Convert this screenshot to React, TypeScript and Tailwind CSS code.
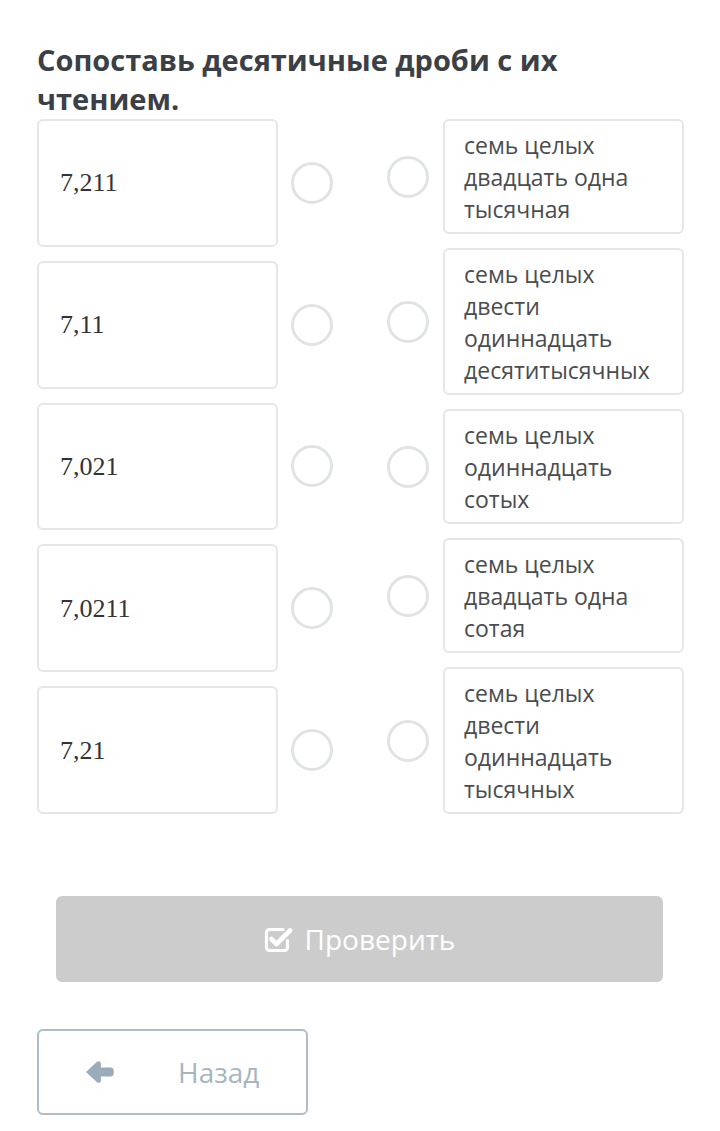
const left = ["7,211", "7,11", "7,021", "7,0211", "7,21"];

const right = [
  ["семь целых", "двадцать одна", "тысячная"],
  ["семь целых", "двести", "одиннадцать", "десятитысячных"],
  ["семь целых", "одиннадцать", "сотых"],
  ["семь целых", "двадцать одна", "сотая"],
  ["семь целых", "двести", "одиннадцать", "тысячных"],
];

const Radio = () => (
  <div className="w-[42px] h-[42px] shrink-0 rounded-full border-[3px] border-[#e0e3e5] bg-white" />
);

const CheckIcon = () => (
  <svg width="29" height="27" viewBox="0 0 29 27" fill="none">
    <path
      d="M19 3.5H5.5a3 3 0 0 0-3 3v15a3 3 0 0 0 3 3h15a3 3 0 0 0 3-3v-7"
      stroke="white"
      strokeWidth="3.2"
      strokeLinecap="round"
    />
    <path
      d="M7.5 13l5 5L26 4.5"
      stroke="white"
      strokeWidth="4.6"
      strokeLinecap="round"
      strokeLinejoin="round"
    />
  </svg>
);

const ArrowIcon = () => (
  <svg width="29" height="24" viewBox="0 0 29 24" fill="#9aacba">
    <path d="M1 12 12 1.8c1.6-1.4 3.9-.3 3.9 1.8V7.5h9.8c1.8 0 3 1.2 3 3v3c0 1.8-1.2 3-3 3h-9.8v3.9c0 2.1-2.3 3.2-3.9 1.8L1 12z" />
  </svg>
);

export default function App() {
  return (
    <div className="w-[720px] min-h-[1131px] bg-white px-[37px] pt-[40px] font-['Open_Sans',sans-serif]">
      <h1 className="text-[29px] leading-[39px] font-bold text-[#3b4047] pr-[100px]">
        Сопоставь десятичные дроби с их чтением.
      </h1>

      <div className="mt-px flex">
        <div className="flex flex-col gap-[14px] w-[297px] shrink-0">
          {left.map((v) => (
            <div key={v} className="flex-1 flex items-center gap-[13px]">
              <div className="w-[241px] shrink-0 h-full flex items-center rounded-[6px] border-2 border-[#e4e6e8] pl-[21px] font-['Liberation_Serif',serif] text-[26px] text-[#333]">
                {v}
              </div>
              <Radio />
            </div>
          ))}
        </div>

        <div className="ml-[53px] flex flex-col gap-[14px]">
          {right.map((lines, i) => (
            <div key={i} className="flex items-center gap-[14px]">
              <Radio />
              <div className="w-[241px] rounded-[6px] border-2 border-[#e4e6e8] pl-[19px] pr-1 py-[7.5px] text-[23px] leading-[32px] text-[#4a4d50] whitespace-nowrap">
                {lines.map((l) => (
                  <div key={l}>{l}</div>
                ))}
              </div>
            </div>
          ))}
        </div>
      </div>

      <button className="mt-[82px] ml-[19px] w-[607px] h-[86px] rounded-[6px] bg-[#cccccc] flex items-center justify-center gap-[12px] text-white text-[28px]">
        <CheckIcon />
        <span>Проверить</span>
      </button>

      <button className="mt-[47px] w-[271px] h-[86px] rounded-[6px] border-2 border-[#aebcc6] flex items-center text-[#a7b5c0] text-[28px]">
        <span className="ml-[46px] flex">
          <ArrowIcon />
        </span>
        <span className="ml-[64px]">Назад</span>
      </button>
    </div>
  );
}
